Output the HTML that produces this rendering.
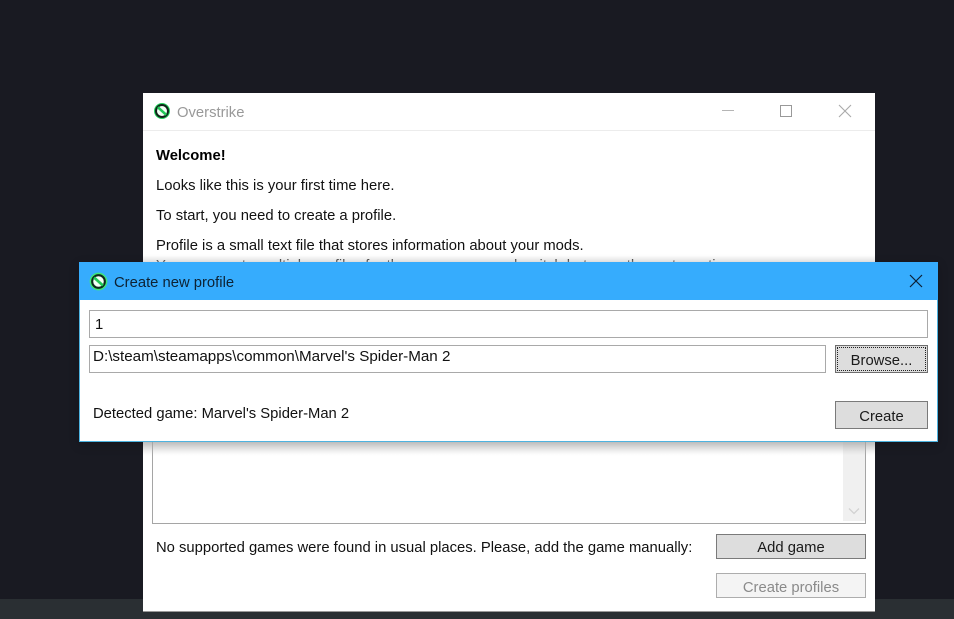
<!DOCTYPE html>
<html>
<head>
<meta charset="utf-8">
<style>
html,body{margin:0;padding:0}
body{width:954px;height:619px;overflow:hidden;position:relative;background:#191a22;font-family:"Liberation Sans",sans-serif;font-size:14.8px;color:#111}
.a{position:absolute}
.t{position:absolute;white-space:nowrap;line-height:18px}
.btn{position:absolute;box-sizing:border-box;border:1px solid #7a7a7a;background:#dddddd;text-align:center;font-size:14.8px;color:#1a1a1a}
.inp{position:absolute;box-sizing:border-box;border:1px solid #a9a9a9;background:#fff}
</style>
</head>
<body>
<div class="a" style="left:0;top:599px;width:954px;height:20px;background:#2a2f33"></div>
<div class="a" style="left:143px;top:93px;width:732px;height:518px;background:#fff;box-shadow:0 1px 0 #999"></div>
<div class="a" style="left:143px;top:130px;width:732px;height:1px;background:#ececec"></div>
<svg class="a" style="left:153px;top:102px" width="18" height="18" viewBox="0 0 18 18"><circle cx="9" cy="9" r="8" fill="#22d25c"/><circle cx="9" cy="9" r="6" fill="#f4fff6" stroke="#10241a" stroke-width="2"/><path d="M4.8 5.2L13.2 12.8" stroke="#22c858" stroke-width="2.6"/></svg>
<div class="t" style="left:177px;top:104px;color:#999">Overstrike</div>
<div class="a" style="left:722px;top:110px;width:12px;height:1px;background:#b5b5b5"></div>
<div class="a" style="left:780px;top:105px;width:10px;height:10px;box-sizing:content-box;border:1px solid #999"></div>
<svg class="a" style="left:838px;top:104px" width="14" height="14" viewBox="0 0 14 14"><path d="M1 1L13 13M13 1L1 13" stroke="#aaa" stroke-width="1.1" fill="none"/></svg>
<div class="t" style="left:156px;top:147px;font-weight:bold;color:#000">Welcome!</div>
<div class="t" style="left:156px;top:177px">Looks like this is your first time here.</div>
<div class="t" style="left:156px;top:207px">To start, you need to create a profile.</div>
<div class="t" style="left:156px;top:237px">Profile is a small text file that stores information about your mods.</div>
<div class="t" style="left:156px;top:257px">You can create multiple profiles for the same game and switch between them at any time.</div>
<div class="a" style="left:143px;top:255px;width:732px;height:7px;background:linear-gradient(to bottom,rgba(255,255,255,0),rgba(215,215,215,.5))"></div>
<div class="a" style="left:152px;top:430px;width:712px;height:93px;border:1px solid #a5a5a5;border-top:0;background:#fff"></div>
<div class="a" style="left:843px;top:430px;width:22px;height:91px;background:#f0f0f0"></div>
<svg class="a" style="left:848px;top:507px" width="12" height="9" viewBox="0 0 12 9"><path d="M1 1.5L6 6.5L11 1.5" stroke="#d2d2d2" stroke-width="1.3" fill="none"/></svg>
<div class="a" style="left:143px;top:441px;width:732px;height:14px;background:linear-gradient(to bottom,rgba(205,205,205,.75),rgba(255,255,255,0))"></div>
<div class="t" style="left:156px;top:539px">No supported games were found in usual places. Please, add the game manually:</div>
<div class="btn" style="left:716px;top:534px;width:150px;height:25px;line-height:27px">Add game</div>
<div class="btn" style="left:716px;top:573px;width:150px;height:25px;line-height:28px;background:#f4f4f4;border-color:#adadad;color:#8a8a8a">Create profiles</div>

<div class="a" style="left:79px;top:262px;width:859px;height:180px;box-sizing:border-box;background:#fff;border:1px solid #4db3e0;border-top:0;box-shadow:0 3px 10px rgba(0,0,0,.2)"></div>
<div class="a" style="left:79px;top:262px;width:859px;height:38px;background:#36acfd"></div>
<svg class="a" style="left:89px;top:272px" width="19" height="19" viewBox="0 0 18 18"><circle cx="9" cy="9" r="8.4" fill="#3ee67a"/><circle cx="9" cy="9" r="6" fill="#f4fff6" stroke="#0f2a1c" stroke-width="2"/><path d="M4.8 5.2L13.2 12.8" stroke="#22c858" stroke-width="2.6"/></svg>
<div class="t" style="left:114px;top:274px;color:#0d2233">Create new profile</div>
<svg class="a" style="left:909px;top:274px" width="14" height="14" viewBox="0 0 14 14"><path d="M1 1L13 13M13 1L1 13" stroke="#0c1f33" stroke-width="1.2" fill="none"/></svg>
<div class="inp" style="left:89px;top:310px;width:839px;height:28px"></div>
<div class="t" style="left:95px;top:316px">1</div>
<div class="inp" style="left:89px;top:345px;width:737px;height:28px"></div>
<div class="t" style="left:93px;top:348px;font-size:15.2px">D:\steam\steamapps\common\Marvel's Spider-Man 2</div>
<div class="btn" style="left:835px;top:345px;width:93px;height:28px;line-height:30px;border-color:#6e6e6e">Browse...</div>
<div class="a" style="left:837px;top:347px;width:87px;height:22px;border:1px dotted #222"></div>
<div class="t" style="left:93px;top:405px">Detected game: Marvel's Spider-Man 2</div>
<div class="btn" style="left:835px;top:401px;width:93px;height:28px;line-height:30px">Create</div>
</body>
</html>
